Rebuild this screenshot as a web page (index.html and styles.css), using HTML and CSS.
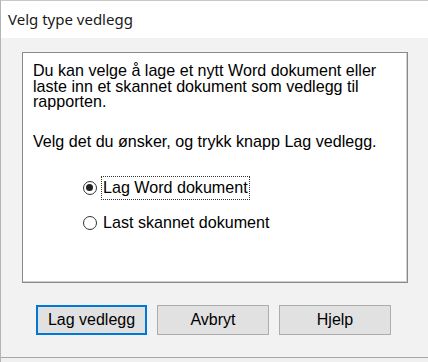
FILE: index.html
```html
<!DOCTYPE html>
<html>
<head>
<meta charset="utf-8">
<link rel="stylesheet" href="styles.css">
</head>
<body>
<div class="window">
  <div class="titlebar">Velg type vedlegg</div>
  <div class="client">
    <div class="group">
      <p class="para">Du kan velge å lage et nytt Word dokument eller laste inn et skannet dokument som vedlegg til rapporten.</p>
      <p class="para second">Velg det du ønsker, og trykk knapp Lag vedlegg.</p>
      <div class="options">
        <label class="option"><span class="radio checked"></span><span class="label focus">Lag Word dokument</span></label>
        <label class="option"><span class="radio"></span><span class="label">Last skannet dokument</span></label>
      </div>
    </div>
    <div class="buttons">
      <button class="btn default">Lag vedlegg</button>
      <button class="btn">Avbryt</button>
      <button class="btn">Hjelp</button>
    </div>
  </div>
  <div class="taskbar"></div>
</div>
</body>
</html>
```

FILE: styles.css
```css
html, body {
  margin: 0;
  padding: 0;
  background: #f0f0f0;
}
.window {
  width: 428px;
  height: 362px;
  box-sizing: border-box;
  border-left: 1px solid #b4b4b4;
  border-top: 1px solid #c8c8c8;
  display: flex;
  flex-direction: column;
  background: #f0f0f0;
}
.titlebar {
  height: 37px;
  box-sizing: border-box;
  background: #ffffff;
  padding: 8px 0 0 7px;
  font-family: "Noto Sans", "Open Sans", sans-serif;
  font-size: 15px;
  color: #1a1a1a;
}
.client {
  flex: 1;
  background: #f2f2f2;
  padding: 14px 0 0 21px;
  font-family: "Liberation Sans", Arial, sans-serif;
  font-size: 16.1px;
  color: #000;
  border-bottom: 1px solid #a8a8a8;
}
.group {
  width: 386px;
  height: 231px;
  box-sizing: border-box;
  background: #ffffff;
  border: 1px solid #8a8a8a;
  box-shadow: inset -1px -1px 0 #d0d0d0;
  padding: 10px 8px 0 10px;
}
.para {
  margin: 0;
  line-height: 15.5px;
}
.para.second {
  margin-top: 24px;
}
.options {
  margin: 27px 0 0 50px;
  display: flex;
  flex-direction: column;
  gap: 12px;
}
.option {
  display: flex;
  align-items: center;
  gap: 4px;
  height: 23px;
}
.radio {
  width: 14px;
  height: 14px;
  box-sizing: border-box;
  border: 1.5px solid #333;
  border-radius: 50%;
  background: #fff;
  position: relative;
}
.radio.checked::after {
  content: "";
  position: absolute;
  left: 2px;
  top: 2px;
  width: 7px;
  height: 7px;
  border-radius: 50%;
  background: #222;
}
.label {
  padding: 1px 1px 2px 1px;
  border: 1px dotted transparent;
}
.label.focus {
  border-color: #333;
}
.buttons {
  display: flex;
  gap: 10px;
  margin: 22px 0 0 14px;
}
.btn {
  width: 112px;
  height: 30px;
  box-sizing: border-box;
  background: #e1e1e1;
  border: 1px solid #adadad;
  font-family: "Liberation Sans", Arial, sans-serif;
  font-size: 16px;
  color: #000;
  padding: 0;
}
.btn.default {
  border: 2px solid #0078d7;
  width: 111px;
}
.taskbar {
  height: 4px;
  background: #f0f0f0;
}
```
